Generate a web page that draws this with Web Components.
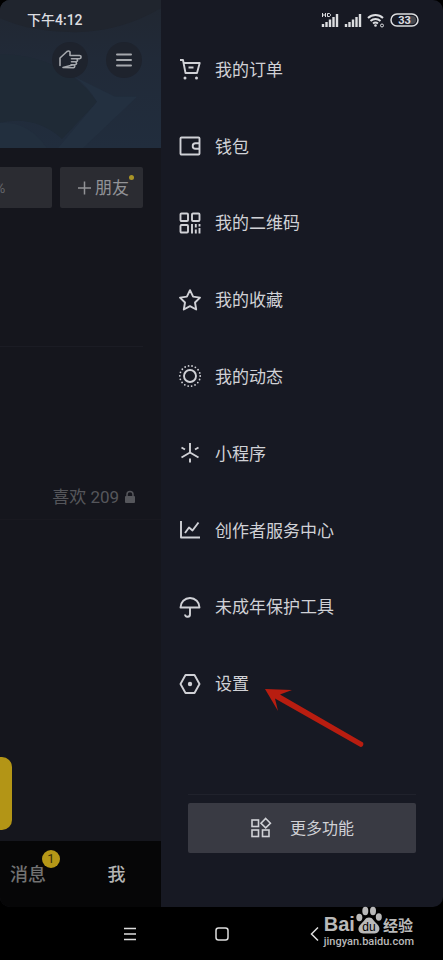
<!DOCTYPE html>
<html lang="zh-CN">
<head>
<meta charset="utf-8">
<meta name="viewport" content="width=device-width, initial-scale=1">
<title>我</title>
<style>
    body{
        margin: 0;
        background: #000000;
        font-family: Roboto, "Noto Sans CJK SC", sans-serif;
    }
</style>
</head>
<body>
<phone-screen>
    <status-bar slot="status"></status-bar>
    <profile-page slot="page"></profile-page>
    <side-drawer slot="drawer">
        <menu-item icon="cart">我的订单</menu-item>
        <menu-item icon="wallet">钱包</menu-item>
        <menu-item icon="qrcode">我的二维码</menu-item>
        <menu-item icon="star">我的收藏</menu-item>
        <menu-item icon="moments">我的动态</menu-item>
        <menu-item icon="mini">小程序</menu-item>
        <menu-item icon="chart">创作者服务中心</menu-item>
        <menu-item icon="umbrella">未成年保护工具</menu-item>
        <menu-item icon="settings">设置</menu-item>
    </side-drawer>
    <system-nav slot="nav"></system-nav>
</phone-screen>

<script>
"use strict"

const icons = {
    cart: `<path d="M1 2h3l2.500 13h11.500l2.700-10H5M9.500 9.500h5"/><circle cx="6" cy="20" r="1.500" fill="currentColor" stroke="none"/><circle cx="17.500" cy="20" r="1.500" fill="currentColor" stroke="none"/>`,
    wallet: `<rect x="1.500" y="2.500" width="19" height="17" rx="1"/><path d="M20.500 8.200h-4a2.800 2.800 0 0 0 0 5.600h4"/>`,
    qrcode: `<rect x="1.500" y="1.500" width="7.500" height="7.500" rx="1"/><rect x="13" y="1.500" width="7.500" height="7.500" rx="1"/><rect x="1.500" y="13" width="7.500" height="7.500" rx="1"/><path d="M13 12v9.500M16.800 12v3.500M16.800 17.500v4M20.500 12v2.500M20.500 16v5.500"/>`,
    star: `<path d="M11 1.200l3.100 6.400 6.900 1-5 4.900 1.200 7-6.200-3.300-6.200 3.300 1.200-7-5-4.900 6.900-1z"/>`,
    moments: `<circle cx="11" cy="11" r="6"/><circle cx="11" cy="11" r="10.200" stroke-width="1.800" stroke-linecap="round" stroke-dasharray="0 3.560"/>`,
    mini: `<path d="M11 1v9.500M11 10.500L2.500 15.500M11 10.500l8.500 5M11 16.500v4M2.500 5.500l3.500 2M19.500 5.500l-3.500 2"/>`,
    chart: `<path d="M2 2v16.500h19M6 14l4-5.500 3.500 3L19.500 3.500"/>`,
    umbrella: `<path d="M1.500 11.500a9.500 9.500 0 0 1 19 0zM11 11.500v6.500a2.500 2.500 0 0 1-5 .500"/>`,
    settings: `<path d="M6.500 2h9l5 9-5 9h-9l-5-9z"/><circle cx="11" cy="11" r="2.200" fill="currentColor" stroke="none"/>`
};

class PhoneScreen extends HTMLElement{
    constructor(){
        super();
        this.attachShadow({mode: "open"});
    }

    connectedCallback(){
        this.shadowRoot.innerHTML = `
        <style>
        :host{
            display: flex;
            flex-direction: column;
            min-height: 100vh;
            position: relative;
            background: #000000;
        }

        .app{
            flex: 1;
            display: grid;
            grid-template-columns: 4fr 7fr;
            position: relative;
            overflow: hidden;
            border-radius: 10px;
        }

        .status{
            position: absolute;
            top: 0;
            left: 0;
            right: 0;
        }
        </style>
        <div class="app">
            <slot name="page"></slot>
            <slot name="drawer"></slot>
            <div class="status"><slot name="status"></slot></div>
        </div>
        <slot name="nav"></slot>
        `;
    }
}

class StatusBar extends HTMLElement{
    constructor(){
        super();
        this.attachShadow({mode: "open"});
    }

    connectedCallback(){
        this.shadowRoot.innerHTML = `
        <style>
        :host{
            display: flex;
            justify-content: space-between;
            align-items: center;
            height: 39px;
            padding: 0 24px 0 27px;
            color: #dcdde0;
        }

        time{
            font: 500 14px/20px Roboto, "Noto Sans CJK SC", sans-serif;
        }

        .signals{
            display: flex;
            align-items: center;
            gap: 5px;
        }

        svg{
            display: block;
        }
        </style>
        <time>下午4:12</time>
        <div class="signals">
            <svg width="18" height="16" viewBox="0 0 18 16" fill="none" stroke="currentColor" aria-label="HD">
                <path stroke-width="1" d="M1.500 1v4M1.500 3h3M4.500 1v4M6.500 1.500v3h2l1-1v-1l-1-1z"/>
                <path stroke-width="2.400" d="M2 12v3M5.500 10v5M9 7.500v7.500M12.500 5v10M16 2v13"/>
            </svg>
            <svg width="18" height="16" viewBox="0 0 18 16" fill="none" stroke="currentColor" stroke-width="2.400">
                <path d="M2 12v3M5.500 10v5M9 7.500v7.500M12.500 5v10M16 2v13"/>
            </svg>
            <svg width="18" height="16" viewBox="0 0 18 16" fill="none" stroke="currentColor" stroke-width="2">
                <path d="M1 6a11 11 0 0 1 15 0M3.500 9a7.500 7.500 0 0 1 10 0M6 11.500a4 4 0 0 1 5 0"/>
                <circle cx="8.500" cy="13.500" r="1.300" fill="currentColor" stroke="none"/>
                <circle cx="15" cy="13.500" r="1.500" stroke-width="1"/>
            </svg>
            <svg width="29" height="16" viewBox="0 0 29 16">
                <rect x="1" y="2" width="27" height="12" rx="6" fill="none" stroke="currentColor" stroke-width="1.500"/>
                <path d="M18 4h4a4 4 0 0 1 0 8h-4z" fill="#45474e"/>
                <text x="14.500" y="12" text-anchor="middle" fill="currentColor" font-family="Roboto" font-weight="700" font-size="11">33</text>
            </svg>
        </div>
        `;
    }
}

class ProfilePage extends HTMLElement{
    constructor(){
        super();
        this.attachShadow({mode: "open"});
    }

    connectedCallback(){
        this.shadowRoot.innerHTML = `${this.render()} ${this.styles()}`;
    }

    render(){
        return `
        <header class="banner">
            <svg class="art" viewBox="0 0 161 147" preserveAspectRatio="none" aria-hidden="true">
                <defs>
                    <linearGradient id="sky" x2="0" y2="1">
                        <stop offset="0" stop-color="#212731"/>
                        <stop offset=".4" stop-color="#212a38"/>
                        <stop offset="1" stop-color="#212d3d"/>
                    </linearGradient>
                </defs>
                <rect width="161" height="147" fill="url(#sky)"/>
                <path d="M0 0h161v8Q120 32 75 32T0 18z" fill="#20252e"/>
                <path d="M0 54Q62 54 97 101L62 138Q35 114 0 122z" fill="#1f2a36"/>
                <path d="M97 101Q88 86 74 76L115 96h22l-54 51H58z" fill="#233040"/>
                <path d="M0 122q28-2 47 25H0z" fill="#222f3e"/>
            </svg>
            <div class="tools">
                <button class="round" aria-label="指引">
                    <svg width="24" height="22" viewBox="0 0 24 22" fill="none" stroke="currentColor" stroke-width="1.600" stroke-linejoin="round" stroke-linecap="round">
                        <path d="M2 16.500V9L9 2.500Q11 1.200 12 3V6.500H21.500a1.600 1.600 0 0 1 0 3.200H13.500M18 9.700a1.500 1.500 0 0 1 0 3H13.500M17 12.700a1.500 1.500 0 0 1 0 3H13M15.500 15.700a1.500 1.500 0 0 1-.500 3L5 18.500z"/>
                    </svg>
                </button>
                <button class="round" aria-label="菜单">
                    <svg width="18" height="18" viewBox="0 0 18 18" fill="none" stroke="currentColor" stroke-width="2" stroke-linecap="round">
                        <path d="M2 3.500h14M2 9h14M2 14.500h14"/>
                    </svg>
                </button>
            </div>
        </header>
        <div class="actions">
            <button class="edit">%</button>
            <button class="friend">
                <svg width="13" height="14" viewBox="0 0 13 14" stroke="currentColor" stroke-width="1.500"><path d="M6.500 .500v13M0 7h13"/></svg>
                <span>朋友</span>
                <i class="dot"></i>
            </button>
        </div>
        <hr>
        <div class="likes">
            <span>喜欢 209</span>
            <svg width="12" height="14" viewBox="0 0 12 14"><path d="M3 7V4.500a3 3 0 0 1 6 0V7" fill="none" stroke="currentColor" stroke-width="1.500"/><rect x="1" y="6" width="10" height="7" rx="1" fill="currentColor"/></svg>
        </div>
        <div class="works"><div class="card"></div></div>
        <nav class="tabs">
            <button class="tab">消息<span class="badge">1</span></button>
            <button class="tab active">我</button>
        </nav>
        `
    }

    styles(){
        return `
        <style>
        :host{
            display: flex;
            flex-direction: column;
            min-width: 0;
            overflow: hidden;
            background: #15161d;
            color: #929397;
        }

        button{
            border: 0;
            padding: 0;
            color: inherit;
            font: 17px/24px Roboto, "Noto Sans CJK SC", sans-serif;
        }

        svg{
            display: block;
        }

        .banner{
            position: relative;
            height: 148px;
        }

        .art{
            position: absolute;
            width: 100%;
            height: 100%;
        }

        .tools{
            position: relative;
            display: flex;
            justify-content: flex-end;
            gap: 18px;
            padding: 42px 19px 0 0;
        }

        .round{
            display: grid;
            place-items: center;
            width: 36px;
            height: 36px;
            border-radius: 50%;
            background: #1e232d;
            color: #a5a8ad;
        }

        .actions{
            display: flex;
            justify-content: flex-end;
            gap: 8px;
            padding: 19px 18px 0 0;
        }

        .actions button{
            flex: none;
            height: 41px;
            border-radius: 2px;
            background: #2b2c32;
        }

        .actions .edit{
            width: 104px;
            color: #66676c;
            font-size: 14px;
        }

        .actions .friend{
            position: relative;
            display: flex;
            align-items: center;
            justify-content: center;
            gap: 4px;
            width: 83px;
            padding-left: 4px;
        }

        .dot{
            position: absolute;
            top: 8px;
            right: 9px;
            width: 5px;
            height: 5px;
            border-radius: 50%;
            background: #a99427;
        }

        hr{
            margin: 138px 18px 0 0;
            border: 0;
            border-top: 1px solid #1b1c24;
        }

        .likes{
            display: flex;
            align-items: center;
            justify-content: flex-end;
            gap: 5px;
            padding: 138px 25px 10px 0;
            border-bottom: 1px solid #191920;
            color: #55565b;
            font-size: 17px;
            line-height: 24px;
            white-space: nowrap;
        }

        .works{
            flex: 1;
            display: flex;
            align-items: flex-end;
            padding-bottom: 11px;
        }

        .card{
            width: 12px;
            height: 73px;
            border-radius: 0 10px 10px 0;
            background: #b39516;
        }

        .tabs{
            display: grid;
            grid-template-columns: 56px 1fr;
            height: 66px;
            background: #060607;
        }

        .tab{
            position: relative;
            padding-top: 2px;
            background: none;
            color: #727272;
            font-size: 18px;
            font-weight: 500;
            white-space: nowrap;
        }

        .tab.active{
            padding-left: 16px;
            color: #b4b4b4;
        }

        .badge{
            position: absolute;
            top: 9px;
            right: -4px;
            width: 18px;
            height: 18px;
            border-radius: 50%;
            background: #b59717;
            color: #3a300a;
            font-size: 13px;
            font-weight: 400;
            line-height: 18px;
            text-align: center;
        }
        </style>
        `
    }
}

class SideDrawer extends HTMLElement{
    constructor(){
        super();
        this.attachShadow({mode: "open"});
    }

    connectedCallback(){
        this.shadowRoot.innerHTML = `${this.render()} ${this.styles()}`;
    }

    render(){
        return `
        <nav><slot></slot></nav>
        <svg class="arrow" width="102" height="62" viewBox="0 0 102 62" aria-hidden="true">
            <path d="M1 1L28 2L16 6.500L99 54.500A3 3 0 0 1 96.500 59L11 10.500L14 23z" fill="#b81d10"/>
        </svg>
        <footer>
            <button>
                <svg width="22" height="22" viewBox="0 0 22 22" fill="none" stroke="currentColor" stroke-width="1.600">
                    <rect x="2" y="3" width="6.500" height="6.500"/>
                    <rect x="2" y="13" width="6.500" height="6.500"/>
                    <rect x="12.500" y="13" width="6.500" height="6.500"/>
                    <path d="M15.700 1.500l4.700 4.700-4.700 4.700L11 6.200z"/>
                </svg>
                <span>更多功能</span>
            </button>
        </footer>
        `
    }

    styles(){
        return `
        <style>
        :host{
            display: flex;
            flex-direction: column;
            position: relative;
            padding-top: 31px;
            background: #171923;
            color: #d0d1d6;
        }

        nav{
            flex: 1;
            display: grid;
            grid-auto-rows: 1fr;
        }

        .arrow{
            position: absolute;
            top: 688px;
            left: 103px;
        }

        footer{
            margin: 72px 27px 54px;
            padding-top: 8px;
            border-top: 1px solid #20222c;
        }

        button{
            display: flex;
            align-items: center;
            justify-content: center;
            gap: 18px;
            width: 100%;
            height: 50px;
            border: 0;
            border-radius: 2px;
            background: #393a43;
            color: inherit;
            font: 16px/24px Roboto, "Noto Sans CJK SC", sans-serif;
        }

        span{
            padding-top: 2px;
        }
        </style>
        `
    }
}

class MenuItem extends HTMLElement{
    constructor(){
        super();
        this.attachShadow({mode: "open"});
    }

    connectedCallback(){
        this.shadowRoot.innerHTML = `
        <style>
        :host{
            display: grid;
        }

        a{
            display: flex;
            align-items: center;
            gap: 14px;
            padding: 0 18px;
            color: inherit;
            font-size: 17px;
            line-height: 24px;
            text-decoration: none;
        }

        svg{
            flex: none;
        }

        span{
            padding-top: 1px;
        }
        </style>
        <a href="#${this.getAttribute('icon')}">
            <svg width="22" height="22" viewBox="0 0 22 22" fill="none" stroke="currentColor" stroke-width="1.900" stroke-linejoin="round" overflow="visible">${icons[this.getAttribute('icon')]}</svg>
            <span><slot></slot></span>
        </a>
        `;
    }
}

class SystemNav extends HTMLElement{
    constructor(){
        super();
        this.attachShadow({mode: "open"});
    }

    connectedCallback(){
        this.shadowRoot.innerHTML = `
        <style>
        :host{
            display: flex;
            align-items: center;
            justify-content: center;
            gap: 44px;
            position: relative;
            height: 53px;
            color: #dddddd;
        }

        button{
            display: grid;
            place-items: center;
            width: 48px;
            height: 48px;
            border: 0;
            padding: 0;
            background: none;
            color: inherit;
        }

        .mark{
            position: absolute;
            right: 29px;
            bottom: 11px;
            color: #b9b9b9;
        }

        .brand{
            display: flex;
            align-items: flex-end;
            gap: 1px;
            height: 29px;
        }

        .brand b{
            font: bold 20px/22px "Liberation Sans", sans-serif;
        }

        .brand strong{
            font: bold 15px/20px "Noto Sans CJK SC", sans-serif;
        }

        small{
            display: block;
            font: 500 11px/14px Roboto, sans-serif;
        }
        </style>
        <button aria-label="最近任务"><svg width="14" height="14" viewBox="0 0 14 14" stroke="currentColor" stroke-width="1.300"><path d="M1 1.500h12M1 7h12M1 12.500h12"/></svg></button>
        <button aria-label="主屏幕"><svg width="14" height="14" viewBox="0 0 14 14" fill="none" stroke="currentColor" stroke-width="1.500"><rect x="1" y="1" width="12" height="12" rx="2.500"/></svg></button>
        <button aria-label="返回"><svg width="14" height="14" viewBox="0 0 14 14" fill="none" stroke="currentColor" stroke-width="1.500"><path d="M11 .500L4.500 7l6.500 6.500"/></svg></button>
        <div class="mark">
            <div class="brand">
                <b>Bai</b>
                <svg width="26" height="29" viewBox="0 0 26 29" fill="currentColor">
                    <ellipse cx="3.300" cy="11.500" rx="3" ry="3.700"/>
                    <ellipse cx="9.300" cy="5" rx="3" ry="4.200"/>
                    <ellipse cx="17" cy="5" rx="3" ry="4.200"/>
                    <ellipse cx="22.800" cy="11" rx="3" ry="3.700"/>
                    <path d="M13 11.500c4 0 4.500 3.500 8 6.500 5 4.500 1.500 9.500-2.500 9.500h-11c-4.500 0-7.500-5-2.500-9.500 3.500-3 4-6.500 8-6.500z"/>
                    <text x="13" y="25" text-anchor="middle" fill="#000000" font-family="Liberation Sans" font-size="12">du</text>
                </svg>
                <strong>经验</strong>
            </div>
            <small>jingyan.baidu.com</small>
        </div>
        `;
    }
}

customElements.define('phone-screen', PhoneScreen);
customElements.define('status-bar', StatusBar);
customElements.define('profile-page', ProfilePage);
customElements.define('side-drawer', SideDrawer);
customElements.define('menu-item', MenuItem);
customElements.define('system-nav', SystemNav);
</script>
</body>
</html>
